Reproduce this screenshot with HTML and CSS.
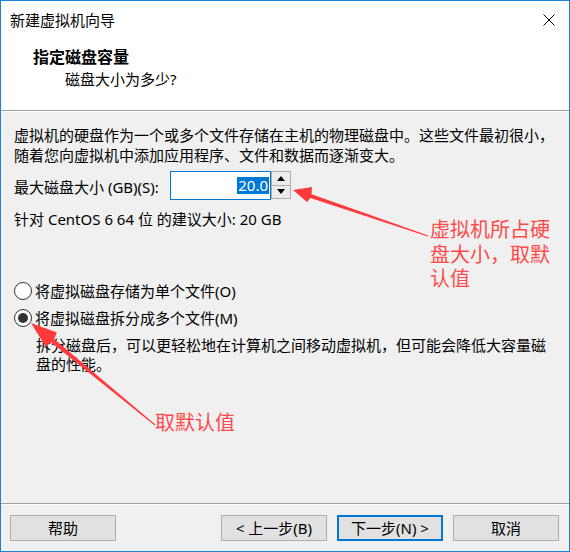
FILE: index.html
```html
<!DOCTYPE html>
<html lang="zh-CN">
<head>
<meta charset="utf-8">
<title>新建虚拟机向导</title>
<link rel="stylesheet" href="styles.css">
</head>
<body>
<div class="window">
  <div class="titlebar">
    <span class="title">新建虚拟机向导</span>
    <svg class="close" width="12" height="12" viewBox="0 0 12 12"><path d="M0.5 0.5 L11.5 11.5 M11.5 0.5 L0.5 11.5" stroke="#000" stroke-width="1" fill="none"/></svg>
  </div>
  <div class="header">
    <div class="h-title">指定磁盘容量</div>
    <div class="h-sub">磁盘大小为多少?</div>
  </div>
  <div class="content">
    <p class="intro">虚拟机的硬盘作为一个或多个文件存储在主机的物理磁盘中。这些文件最初很小，<br>随着您向虚拟机中添加应用程序、文件和数据而逐渐变大。</p>
    <div class="size-row">
      <span class="size-label">最大磁盘大小 (GB)(S):</span>
      <div class="spin-input"><span class="sel">20.0</span></div>
      <div class="spin-btns">
        <div class="spin-btn"><svg width="8" height="5" viewBox="0 0 8 5"><path d="M0 5 L4 0 L8 5 Z" fill="#000"/></svg></div>
        <div class="spin-btn"><svg width="8" height="5" viewBox="0 0 8 5"><path d="M0 0 L8 0 L4 5 Z" fill="#000"/></svg></div>
      </div>
    </div>
    <p class="rec">针对 CentOS 6 64 位 的建议大小: 20 GB</p>
    <div class="radios">
      <div class="radio"><span class="circle"></span><span>将虚拟磁盘存储为单个文件(O)</span></div>
      <div class="radio checked"><span class="circle"></span><span>将虚拟磁盘拆分成多个文件(M)</span></div>
      <p class="desc">拆分磁盘后，可以更轻松地在计算机之间移动虚拟机，但可能会降低大容量磁<br>盘的性能。</p>
    </div>
  </div>
  <div class="footer">
    <button class="btn">帮助</button>
    <div class="btn-group">
      <button class="btn">&lt; 上一步(B)</button>
      <button class="btn primary">下一步(N) &gt;</button>
      <button class="btn">取消</button>
    </div>
  </div>
  <svg class="arrows" width="570" height="552" viewBox="0 0 570 552">
    <polygon points="428.2,235.5 311.6,194.2 312,187 293,190 307,202 310.4,198 427.8,236.5" fill="#ff3a3a"/>
    <polygon points="155.3,424.6 54.1,339 56.9,332.4 31,323 45.5,346.4 51.3,342.4 154.7,425.4" fill="#ff3a3a"/>
  </svg>
  <div class="note note1">
    <div class="note-line">虚拟机所占硬</div>
    <div class="note-line">盘大小，取默</div>
    <div class="note-line">认值</div>
  </div>
  <div class="note note2"><div class="note-line">取默认值</div></div>
</div>
</body>
</html>
```
FILE: styles.css
```css
* { box-sizing: border-box; }
html, body { margin: 0; padding: 0; }
body {
  font-family: "Noto Sans", "Noto Sans CJK SC", sans-serif;
  font-size: 15px;
  color: #000;
  background: #fff;
}
p { margin: 0; }
.window {
  position: relative;
  width: 570px;
  height: 552px;
  border: 1px solid #1883d7;
  background: #f0f0f0;
  display: flex;
  flex-direction: column;
}
.titlebar {
  height: 37px;
  background: #fff;
  display: flex;
  align-items: center;
  justify-content: space-between;
  padding: 0 14px 0 9px;
  line-height: 20px;
}
.close { display: block; }
.header {
  height: 73px;
  background: #fff;
  border-bottom: 1px solid #a0a0a0;
  padding: 9px 0 0 32px;
}
.h-title {
  font-weight: bold;
  font-size: 16px;
  line-height: 20px;
}
.h-sub {
  line-height: 20px;
  margin-top: 2px;
  padding-left: 32px;
}
.content {
  flex: 1;
  padding: 13px 0 0 13px;
  line-height: 20px;
  border-top: 1px solid #fff;
}
.size-row {
  display: flex;
  align-items: center;
  margin-top: 6px;
  height: 29px;
}
.size-label {
  width: 156px;
  flex: none;
  white-space: nowrap;
  padding-top: 3px;
}
.spin-input {
  width: 101px;
  height: 29px;
  border: 1px solid #0078d7;
  background: #fff;
  display: flex;
  align-items: center;
  justify-content: flex-end;
  padding-right: 1px;
}
.sel {
  background: #0078d7;
  color: #fff;
  line-height: 17px;
  padding: 0 1px;
}
.spin-btns {
  width: 20px;
  height: 28px;
  align-self: flex-start;
  border: 1px solid #adadad;
  display: flex;
  flex-direction: column;
}
.spin-btn {
  flex: 1;
  background: #ececec;
  display: flex;
  align-items: center;
  justify-content: center;
}
.spin-btn + .spin-btn { border-top: 1px solid #adadad; }
.spin-btn svg { display: block; }
.rec { margin-top: 9px; }
.radios { margin-top: 52px; }
.radio {
  display: flex;
  align-items: center;
  height: 20px;
}
.radio + .radio { margin-top: 7px; }
.circle {
  width: 18px;
  height: 18px;
  border-radius: 50%;
  border: 1px solid #333;
  background: #fff;
  margin-right: 3px;
  flex: none;
  display: flex;
  align-items: center;
  justify-content: center;
}
.checked .circle::after {
  content: "";
  width: 10px;
  height: 10px;
  border-radius: 50%;
  background: #333;
}
.desc {
  margin-top: 8px;
  padding-left: 22px;
  line-height: 19px;
}
.footer {
  height: 48px;
  border-top: 1px solid #a0a0a0;
  box-shadow: inset 0 1px 0 #fff;
  display: flex;
  align-items: flex-start;
  justify-content: space-between;
  padding: 11px 10px 0 9px;
}
.btn-group { display: flex; gap: 10px; }
.btn {
  width: 106px;
  height: 26px;
  border: 1px solid #adadad;
  background: #e1e1e1;
  font-family: inherit;
  font-size: 15px;
  color: #000;
  padding: 0;
  line-height: 22px;
}
.btn.primary { border: 2px solid #0078d7; }
.arrows {
  position: absolute;
  left: -1px;
  top: -1px;
  pointer-events: none;
}
.note {
  position: absolute;
  color: #ff4a4a;
  font-family: "Noto Sans CJK SC", sans-serif;
  font-size: 20px;
}
.note-line {
  height: 24.5px;
  line-height: 24.5px;
  white-space: nowrap;
}
.note1 { left: 429px; top: 216px; }
.note2 { left: 154px; top: 409px; }
```
